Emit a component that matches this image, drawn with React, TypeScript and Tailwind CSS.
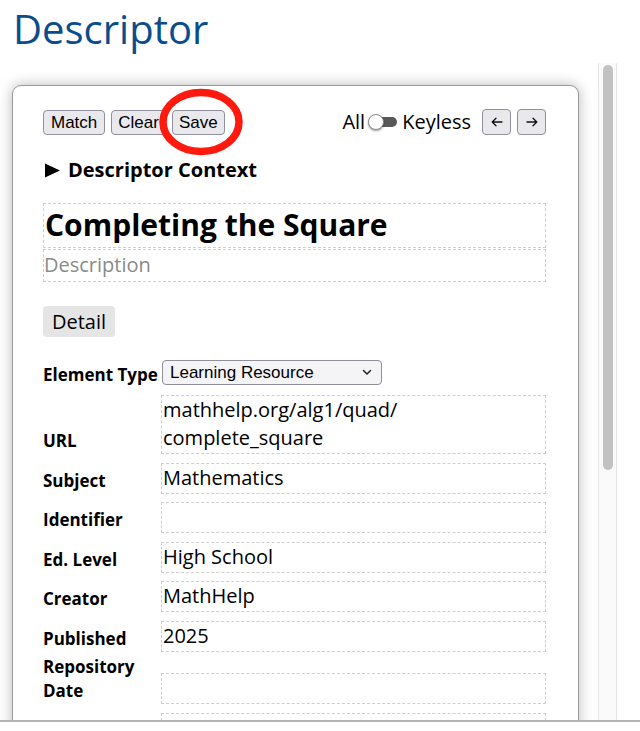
import React from "react";

const sans = "font-['Open_Sans','Noto_Sans',sans-serif]";
const sys = "font-['Liberation_Sans',Arial,sans-serif]";

const fields = [
  { label: "Subject", value: "Mathematics" },
  { label: "Identifier", value: "" },
  { label: "Ed. Level", value: "High School" },
  { label: "Creator", value: "MathHelp" },
  { label: "Published", value: "2025" },
];

function Btn({ children, className = "" }: { children: React.ReactNode; className?: string }) {
  return (
    <button
      className={`flex h-[25px] items-center justify-center rounded-[4px] border border-[#8f8f9d] bg-[#e9e9ed] px-[6px] text-[17px] leading-none text-black ${sys} ${className}`}
    >
      {children}
    </button>
  );
}

function Arrow({ dir }: { dir: "left" | "right" }) {
  return (
    <svg width="12" height="10" viewBox="0 0 12 10" className={dir === "right" ? "rotate-180" : ""}>
      <path d="M11 5H1.5M5 1.2 1.2 5 5 8.8" fill="none" stroke="#111" strokeWidth="1.3" strokeLinecap="round" strokeLinejoin="round" />
    </svg>
  );
}

function Row({ label, children, boxClass = "h-[31px]" }: { label: React.ReactNode; children?: React.ReactNode; boxClass?: string }) {
  return (
    <div className="flex items-end">
      <div className="w-[118px] shrink-0 pb-[1px] text-[17px] font-bold leading-[24px] text-black">{label}</div>
      <div className={`flex-1 border border-dashed border-[#cfcfcf] px-[1px] text-[20px] leading-[28px] text-black ${boxClass}`}>
        {children}
      </div>
    </div>
  );
}

export default function App() {
  return (
    <div className={`relative h-[731px] w-[640px] overflow-hidden bg-white ${sans}`}>
      <h1 className="h-[63px] pl-[13px] pt-[3px] text-[40px] leading-[52px] text-[#0b4d8c]">Descriptor</h1>

      <div className="flex h-[659px] border-b-2 border-[#b4b4b4]">
        <div className="flex-1 overflow-hidden pl-[12px] pr-[19px] pt-[22px]">
          <div className="relative h-[800px] rounded-[9px] border border-[#9a9a9a] bg-white pl-[30px] pr-[32px] pt-[23px] shadow-[0_0_14px_rgba(0,0,0,0.28)]">
            {/* toolbar */}
            <div className="flex items-center justify-between">
              <div className="flex gap-[6px]">
                <Btn className="px-[7px]">Match</Btn>
                <Btn>Clear</Btn>
                <Btn>Save</Btn>
              </div>
              <div className="flex items-center">
                <span className="text-[20px] leading-none">All</span>
                <span className="relative ml-[3px] mr-[5px] h-[16px] w-[29px]">
                  <span className="absolute left-[6px] right-0 top-[3px] h-[10px] rounded-full bg-[#585858]" />
                  <span className="absolute left-0 top-0 h-[16px] w-[16px] rounded-full border border-[#8a8a8a] bg-white shadow-[0_1px_2px_rgba(0,0,0,0.4)]" />
                </span>
                <span className="text-[20px] leading-none">Keyless</span>
                <Btn className="ml-[11px] h-[26px] w-[29px] px-0">
                  <Arrow dir="left" />
                </Btn>
                <Btn className="ml-[6px] h-[26px] w-[29px] px-0">
                  <Arrow dir="right" />
                </Btn>
              </div>
            </div>

            {/* red annotation ring */}
            <svg className="absolute left-[146px] top-[1px]" width="86" height="70" viewBox="0 0 86 70">
              <ellipse cx="42" cy="35" rx="38" ry="29.5" fill="none" stroke="#ff1a0d" strokeWidth="7.5" />
            </svg>

            <div className="mt-[21px] flex items-center text-[20px] font-bold leading-[28px]">
              <svg className="ml-[2px] mr-[8px]" width="15" height="15" viewBox="0 0 15 15">
                <path d="M0 0.5 15 7.5 0 14.5Z" fill="#000" />
              </svg>
              Descriptor Context
            </div>

            <div className="mt-[19px] h-[45px] border border-dashed border-[#cfcfcf] px-[1px] text-[30px] font-bold leading-[42px]">
              Completing the Square
            </div>
            <div className="mt-[1px] h-[33px] border border-dashed border-[#cfcfcf] px-0 text-[20px] leading-[30px] text-[#8a8a8a]">
              Description
            </div>

            <button className="mt-[24px] h-[31px] rounded-[4px] bg-[#e5e5e5] px-[9px] text-[20px] leading-[30px] text-black">
              Detail
            </button>

            <div className="mt-[23px] flex items-end">
              <div className="w-[119px] shrink-0 text-[17px] font-bold leading-[20px]">Element Type</div>
              <div
                className={`flex h-[25px] w-[220px] items-center justify-between rounded-[4px] border border-[#8f8f9d] bg-[#f4f4f6] pl-[7px] pr-[9px] text-[17px] ${sys}`}
              >
                <span>Learning Resource</span>
                <svg width="10" height="7" viewBox="0 0 10 7">
                  <path d="M1.5 1.5 5 5l3.5-3.5" fill="none" stroke="#222" strokeWidth="1.5" strokeLinecap="round" strokeLinejoin="round" />
                </svg>
              </div>
            </div>

            <div className="mt-[10px] flex flex-col gap-[8.5px]">
              <Row label="URL" boxClass="h-[59px]">
                mathhelp.org/alg1/quad/
                <br />
                complete_square
              </Row>
              {fields.map((f) => (
                <Row key={f.label} label={f.label}>
                  {f.value}
                </Row>
              ))}
              <div className="-mt-[5px]">
                <Row
                  label={
                    <>
                      Repository
                      <br />
                      Date
                    </>
                  }
                />
              </div>
              <Row label="" />
            </div>
          </div>
        </div>

        {/* scrollbar */}
        <div className="mr-[23px] flex w-[19px] justify-center border-x border-[#e6e6e6] bg-[#fafafa] pt-[2px]">
          <div className="h-[405px] w-[10px] rounded-full bg-[#c2c2c2]" />
        </div>
      </div>
    </div>
  );
}
